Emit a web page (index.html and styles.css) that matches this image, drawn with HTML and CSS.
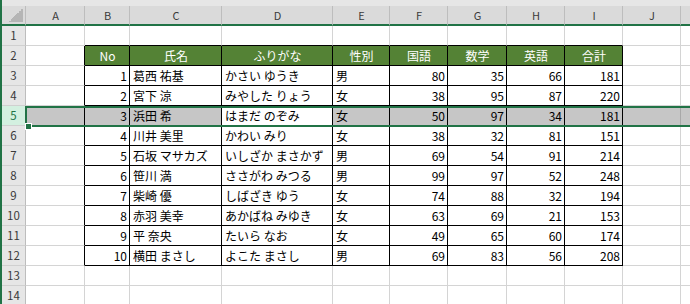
FILE: index.html
```html
<!DOCTYPE html>
<html lang="ja">
<head>
<meta charset="utf-8">
<link rel="stylesheet" href="styles.css">
</head>
<body>
<div class="app">
  <div class="band"></div>
  <div class="sheet">
    <div class="row colhead">
      <div class="c corner"></div>
      <div class="c">A</div><div class="c">B</div><div class="c">C</div><div class="c">D</div><div class="c">E</div><div class="c">F</div><div class="c">G</div><div class="c">H</div><div class="c">I</div><div class="c">J</div><div class="c"></div>
    </div>
    <div class="row">
      <div class="c rh">1</div>
      <div class="c"></div><div class="c bt"></div><div class="c bt"></div><div class="c bt"></div><div class="c bt"></div><div class="c bt"></div><div class="c bt"></div><div class="c bt"></div><div class="c bt"></div><div class="c"></div><div class="c"></div>
    </div>
    <div class="row">
      <div class="c rh">2</div>
      <div class="c bl"></div><div class="c hd">No</div><div class="c hd">氏名</div><div class="c hd">ふりがな</div><div class="c hd">性別</div><div class="c hd">国語</div><div class="c hd">数学</div><div class="c hd">英語</div><div class="c hd">合計</div><div class="c"></div><div class="c"></div>
    </div>
    <div class="row">
      <div class="c rh">3</div>
      <div class="c bl"></div><div class="c tb n">1</div><div class="c tb">葛西 祐基</div><div class="c tb">かさい ゆうき</div><div class="c tb">男</div><div class="c tb n">80</div><div class="c tb n">35</div><div class="c tb n">66</div><div class="c tb n">181</div><div class="c"></div><div class="c"></div>
    </div>
    <div class="row">
      <div class="c rh">4</div>
      <div class="c bl"></div><div class="c tb n">2</div><div class="c tb">宮下 涼</div><div class="c tb">みやした りょう</div><div class="c tb">女</div><div class="c tb n">38</div><div class="c tb n">95</div><div class="c tb n">87</div><div class="c tb n">220</div><div class="c"></div><div class="c"></div>
    </div>
    <div class="row sel">
      <div class="c rh rh-sel">5</div>
      <div class="c bl"></div><div class="c tb n">3</div><div class="c tb">浜田 希</div><div class="c tb active">はまだ のぞみ</div><div class="c tb">女</div><div class="c tb n">50</div><div class="c tb n">97</div><div class="c tb n">34</div><div class="c tb n">181</div><div class="c jsel"></div><div class="c"></div>
    </div>
    <div class="row">
      <div class="c rh">6</div>
      <div class="c bl"></div><div class="c tb n">4</div><div class="c tb">川井 美里</div><div class="c tb">かわい みり</div><div class="c tb">女</div><div class="c tb n">38</div><div class="c tb n">32</div><div class="c tb n">81</div><div class="c tb n">151</div><div class="c"></div><div class="c"></div>
    </div>
    <div class="row">
      <div class="c rh">7</div>
      <div class="c bl"></div><div class="c tb n">5</div><div class="c tb">石坂 マサカズ</div><div class="c tb">いしざか まさかず</div><div class="c tb">男</div><div class="c tb n">69</div><div class="c tb n">54</div><div class="c tb n">91</div><div class="c tb n">214</div><div class="c"></div><div class="c"></div>
    </div>
    <div class="row">
      <div class="c rh">8</div>
      <div class="c bl"></div><div class="c tb n">6</div><div class="c tb">笹川 満</div><div class="c tb">ささがわ みつる</div><div class="c tb">男</div><div class="c tb n">99</div><div class="c tb n">97</div><div class="c tb n">52</div><div class="c tb n">248</div><div class="c"></div><div class="c"></div>
    </div>
    <div class="row">
      <div class="c rh">9</div>
      <div class="c bl"></div><div class="c tb n">7</div><div class="c tb">柴崎 優</div><div class="c tb">しばざき ゆう</div><div class="c tb">女</div><div class="c tb n">74</div><div class="c tb n">88</div><div class="c tb n">32</div><div class="c tb n">194</div><div class="c"></div><div class="c"></div>
    </div>
    <div class="row">
      <div class="c rh">10</div>
      <div class="c bl"></div><div class="c tb n">8</div><div class="c tb">赤羽 美幸</div><div class="c tb">あかばね みゆき</div><div class="c tb">女</div><div class="c tb n">63</div><div class="c tb n">69</div><div class="c tb n">21</div><div class="c tb n">153</div><div class="c"></div><div class="c"></div>
    </div>
    <div class="row">
      <div class="c rh">11</div>
      <div class="c bl"></div><div class="c tb n">9</div><div class="c tb">平 奈央</div><div class="c tb">たいら なお</div><div class="c tb">女</div><div class="c tb n">49</div><div class="c tb n">65</div><div class="c tb n">60</div><div class="c tb n">174</div><div class="c"></div><div class="c"></div>
    </div>
    <div class="row">
      <div class="c rh">12</div>
      <div class="c bl"></div><div class="c tb n">10</div><div class="c tb">横田 まさし</div><div class="c tb">よこた まさし</div><div class="c tb">男</div><div class="c tb n">69</div><div class="c tb n">83</div><div class="c tb n">56</div><div class="c tb n">208</div><div class="c"></div><div class="c"></div>
    </div>
    <div class="row">
      <div class="c rh">13</div>
      <div class="c"></div><div class="c"></div><div class="c"></div><div class="c"></div><div class="c"></div><div class="c"></div><div class="c"></div><div class="c"></div><div class="c"></div><div class="c"></div><div class="c"></div>
    </div>
    <div class="row">
      <div class="c rh">14</div>
      <div class="c"></div><div class="c"></div><div class="c"></div><div class="c"></div><div class="c"></div><div class="c"></div><div class="c"></div><div class="c"></div><div class="c"></div><div class="c"></div><div class="c"></div>
    </div>
    <div class="selbox"></div>
    <div class="handle"></div>
  </div>
</div>
</body>
</html>
```
FILE: styles.css
```css
html, body {
  margin: 0;
  padding: 0;
  background: #ffffff;
  overflow: hidden;
}
.app {
  width: 690px;
  height: 304px;
  box-sizing: border-box;
  border-left: 2px solid #217346;
  overflow: hidden;
  font-family: "Noto Sans CJK JP", "Noto Sans", sans-serif;
  font-size: 12px;
  color: #000;
}
.band {
  height: 6px;
  background: #e6e6e6;
}
.sheet {
  position: relative;
}
.row {
  display: grid;
  grid-template-columns: 24px 59px 45px 92px 111px 57px 58px 59px 58px 58px 58px 40px;
  height: 20px;
}
.c {
  box-sizing: border-box;
  border-right: 1px solid #d4d4d4;
  border-bottom: 1px solid #d4d4d4;
  padding: 0 2px 0 3px;
  line-height: 19px;
  white-space: nowrap;
  overflow: hidden;
}
.colhead {
  background: #dadada;
}
.colhead .c {
  border-right: 1px solid #bdbdbd;
  border-bottom: 2px solid #217346;
  line-height: 18px;
  text-align: center;
  color: #3a3a3a;
  font-size: 11px;
}
.corner {
  background: linear-gradient(to bottom right, transparent 50%, #b5b5b5 50%) right 2px bottom 2px / 14px 14px no-repeat;
}
.rh {
  background: #e6e6e6;
  border-right: 1px solid #bdbdbd;
  border-bottom: 1px solid #d0d0d0;
  text-align: center;
  color: #3a3a3a;
  font-size: 11.5px;
  padding: 0;
}
.bt {
  border-bottom-color: #000;
}
.bl {
  border-right-color: #000;
}
.tb {
  border-right-color: #000;
  border-bottom-color: #000;
}
.hd {
  background: #548235;
  color: #ffffff;
  text-align: center;
  border-right-color: #000;
  border-bottom-color: #000;
}
.n {
  text-align: right;
}
.sel .c {
  background: #c6c6c6;
}
.sel .rh-sel {
  background: #d3f0e0;
  color: #217346;
}
.sel .active {
  background: #ffffff;
}
.sel .jsel {
  border-right-color: #a8a8a8;
}
.selbox {
  position: absolute;
  left: 23px;
  top: 100px;
  width: 700px;
  height: 21px;
  box-sizing: border-box;
  border: 2px solid #217346;
  pointer-events: none;
}
.handle {
  position: absolute;
  left: 23px;
  top: 117px;
  width: 5px;
  height: 5px;
  background: #217346;
  border: 1px solid #ffffff;
}
```
